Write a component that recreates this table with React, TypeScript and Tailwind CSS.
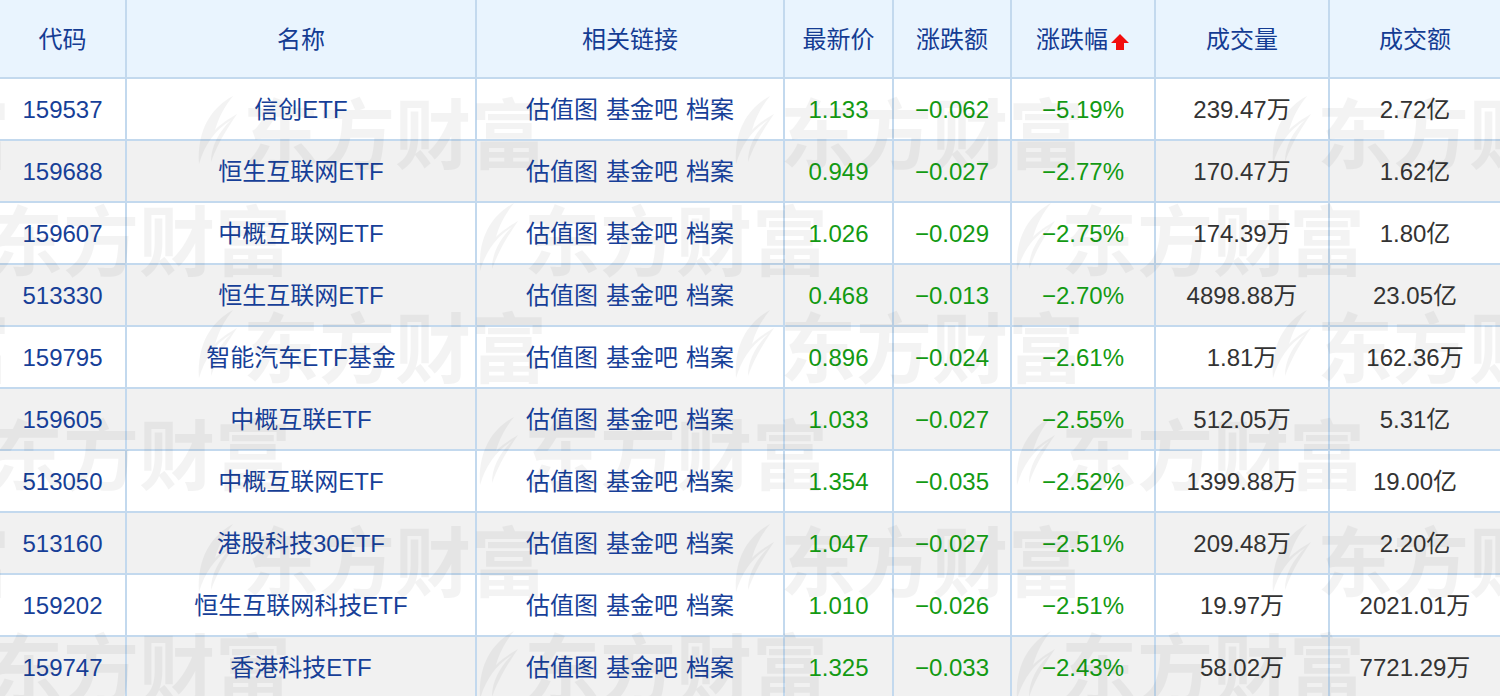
import React from "react";

type Row = {
  code: string;
  name: string;
  price: string;
  chg: string;
  pct: string;
  vol: string;
  amt: string;
};

const rows: Row[] = [
  { code: "159537", name: "信创ETF", price: "1.133", chg: "−0.062", pct: "−5.19%", vol: "239.47万", amt: "2.72亿" },
  { code: "159688", name: "恒生互联网ETF", price: "0.949", chg: "−0.027", pct: "−2.77%", vol: "170.47万", amt: "1.62亿" },
  { code: "159607", name: "中概互联网ETF", price: "1.026", chg: "−0.029", pct: "−2.75%", vol: "174.39万", amt: "1.80亿" },
  { code: "513330", name: "恒生互联网ETF", price: "0.468", chg: "−0.013", pct: "−2.70%", vol: "4898.88万", amt: "23.05亿" },
  { code: "159795", name: "智能汽车ETF基金", price: "0.896", chg: "−0.024", pct: "−2.61%", vol: "1.81万", amt: "162.36万" },
  { code: "159605", name: "中概互联ETF", price: "1.033", chg: "−0.027", pct: "−2.55%", vol: "512.05万", amt: "5.31亿" },
  { code: "513050", name: "中概互联网ETF", price: "1.354", chg: "−0.035", pct: "−2.52%", vol: "1399.88万", amt: "19.00亿" },
  { code: "513160", name: "港股科技30ETF", price: "1.047", chg: "−0.027", pct: "−2.51%", vol: "209.48万", amt: "2.20亿" },
  { code: "159202", name: "恒生互联网科技ETF", price: "1.010", chg: "−0.026", pct: "−2.51%", vol: "19.97万", amt: "2021.01万" },
  { code: "159747", name: "香港科技ETF", price: "1.325", chg: "−0.033", pct: "−2.43%", vol: "58.02万", amt: "7721.29万" },
];

const FONT = "font-['Liberation_Sans','Noto_Sans_CJK_SC',sans-serif]";

function UpArrow() {
  return (
    <svg width="20" height="20" viewBox="0 0 20 20" className="ml-[2px] mt-[4px]">
      <polygon points="10,2 19,11 14,11 14,18 6,18 6,11 1,11" fill="#f20d0d" />
    </svg>
  );
}

function Swoosh() {
  return (
    <svg width="44" height="72" viewBox="0 0 44 72">
      <path
        d="M40 2 C 18 14, 4 36, 6 70 C 12 50, 22 36, 38 26 C 26 38, 18 52, 18 68 C 26 46, 36 32, 44 20 C 34 26, 28 30, 22 36 C 26 22, 32 12, 40 2 Z"
        fill="currentColor"
      />
    </svg>
  );
}

function Mark({ x, y }: { x: number; y: number }) {
  return (
    <div
      className="absolute flex items-center gap-[6px] whitespace-nowrap text-black"
      style={{ left: x, top: y }}
    >
      <Swoosh />
      <span className="whitespace-nowrap text-[76px] font-bold leading-none font-['Noto_Sans_CJK_SC',sans-serif]">
        东方财富
      </span>
    </div>
  );
}

const marks: { x: number; y: number }[] = [];
for (let m = 0; m < 4; m++) {
  const yA = 92 + m * 214;
  const yB = 92 + 107 + m * 214;
  for (let k = -1; k < 3; k++) {
    marks.push({ x: 193 + k * 537, y: yA });
    marks.push({ x: 474 + k * 537, y: yB });
  }
}

export default function App() {
  const head = "bg-[#e9f4fe] flex items-center justify-center text-[#143c93] h-[77px] pt-[2px]";
  return (
    <div className={`relative w-[1500px] h-[696px] overflow-hidden bg-white ${FONT} text-[24px]`}>
      <div className="grid grid-cols-[125px_348px_306px_107px_116px_142px_172px_170px] gap-[2px] bg-[#c3d9ee]">
        <div className={head}>代码</div>
        <div className={head}>名称</div>
        <div className={head}>相关链接</div>
        <div className={head}>最新价</div>
        <div className={head}>涨跌额</div>
        <div className={head}>
          涨跌幅
          <UpArrow />
        </div>
        <div className={head}>成交量</div>
        <div className={head}>成交额</div>
        {rows.map((r, i) => {
          const bg = i % 2 === 0 ? "bg-white" : "bg-[#f1f1f1]";
          const cell = `${bg} h-[60px] flex items-center justify-center pt-[2px]`;
          return (
            <React.Fragment key={r.code + i}>
              <div className={`${cell} text-[#173f98]`}>{r.code}</div>
              <div className={`${cell} text-[#173f98]`}>{r.name}</div>
              <div className={`${cell} text-[#173f98] gap-[8px]`}>
                <span>估值图</span>
                <span>基金吧</span>
                <span>档案</span>
              </div>
              <div className={`${cell} text-[#139a13]`}>{r.price}</div>
              <div className={`${cell} text-[#139a13]`}>{r.chg}</div>
              <div className={`${cell} text-[#139a13]`}>{r.pct}</div>
              <div className={`${cell} text-[#333333]`}>{r.vol}</div>
              <div className={`${cell} text-[#333333]`}>{r.amt}</div>
            </React.Fragment>
          );
        })}
      </div>
      <div className="pointer-events-none absolute left-0 top-0 w-[1500px] h-[696px] opacity-[0.045]">
        {marks.map((p, i) => (
          <Mark key={i} x={p.x} y={p.y} />
        ))}
      </div>
    </div>
  );
}
